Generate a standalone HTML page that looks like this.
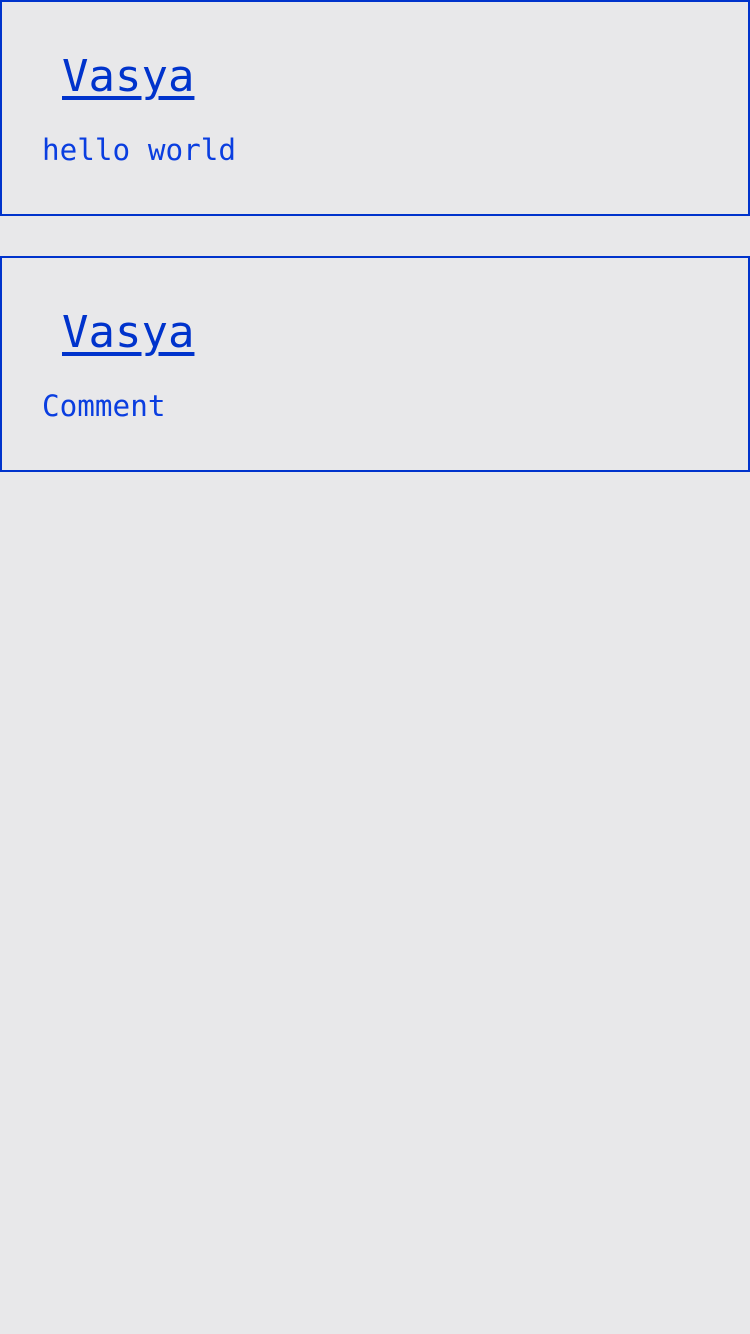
<!DOCTYPE html>
<html><head><style>
body{margin:0;width:750px;height:1334px;background:#e8e8ea;position:relative;font-family:"DejaVu Sans Mono",monospace;}
.box{position:absolute;left:0;width:746px;height:212px;border:2px solid #0033cc;}
.n{position:absolute;left:60px;font-size:44px;line-height:44px;color:#0033cc;text-decoration:underline;text-decoration-thickness:4px;text-underline-offset:5px;}
.t{position:absolute;left:40px;font-size:29.3px;line-height:29px;color:#0a3ee0;}
</style></head><body>
<div class="box" style="top:0"><div class="n" style="top:53px">Vasya</div><div class="t" style="top:134px">hello world</div></div>
<div class="box" style="top:256px"><div class="n" style="top:53px">Vasya</div><div class="t" style="top:134px">Comment</div></div>
</body></html>
